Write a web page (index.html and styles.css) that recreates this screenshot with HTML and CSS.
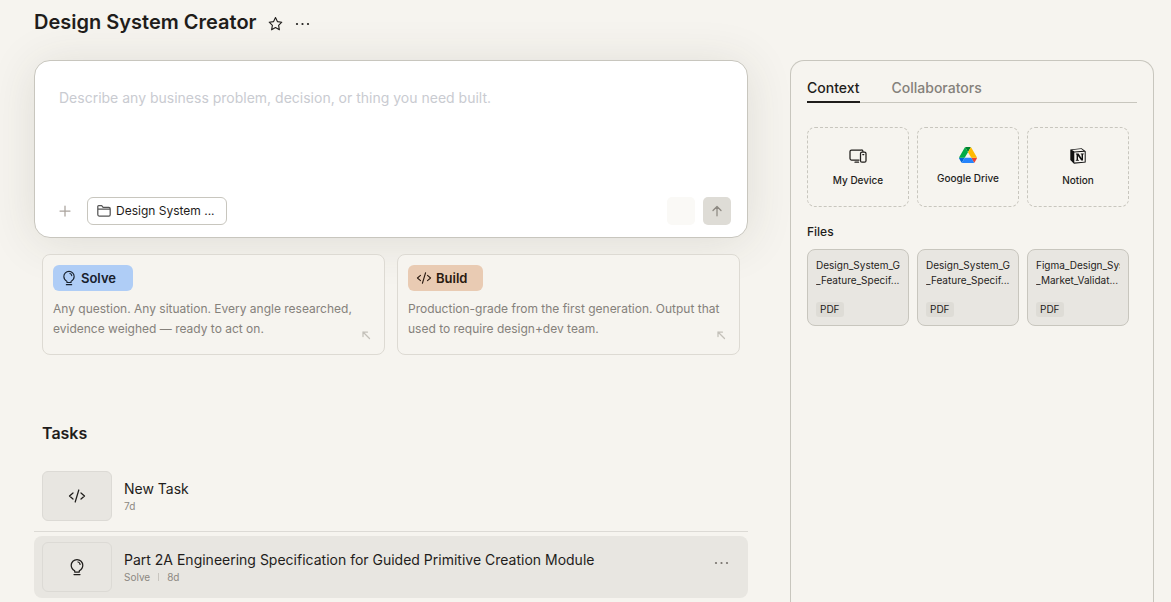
FILE: index.html
```html
<!DOCTYPE html>
<html lang="en">
<head>
<meta charset="utf-8">
<meta name="viewport" content="width=device-width, initial-scale=1">
<title>Design System Creator</title>
<link rel="stylesheet" href="styles.css">
</head>
<body>
<svg class="defs" aria-hidden="true">
  <symbol id="code" viewBox="0 0 18 16"><path d="M5 5 1.500 8 5 11M13 5 16.500 8 13 11M10.800 2 7.200 14"/></symbol>
  <symbol id="bulb" viewBox="0 0 16 18"><path d="M5.700 14v-1.200C3.500 11.600 2.200 9.600 2.200 7.300a5.800 5.800 0 0 1 11.600 0c0 2.300-1.300 4.300-3.500 5.500V14zM5 16.500h6M9 4c1.200.3 1.900 1.100 2.100 2.300"/></symbol>
  <symbol id="dots" viewBox="0 0 16 4"><g fill="currentColor" stroke="none"><circle cx="2" cy="2" r="1.100"/><circle cx="7.500" cy="2" r="1.100"/><circle cx="13" cy="2" r="1.100"/></g></symbol>
  <symbol id="corner" viewBox="0 0 10 10"><path d="M2 6.500V2h4.500M2 2l6.500 6.500"/></symbol>
</svg>
<div class="page">
  <main class="main">
    <header class="title-bar">
      <h1>Design System Creator</h1>
      <button class="icon-btn" aria-label="Favorite"><svg class="star" viewBox="0 0 16 16"><path d="m7.500 1.600 1.900 4 4.400.6-3.200 3.100.8 4.500-3.900-2.200-3.900 2.200.8-4.500L1.200 6.200l4.400-.6z"/></svg></button>
      <button class="icon-btn" aria-label="More options"><svg class="dots"><use href="#dots"/></svg></button>
    </header>
    <form class="composer">
      <textarea aria-label="Prompt" placeholder="Describe any business problem, decision, or thing you need built."></textarea>
      <div class="toolbar">
        <button type="button" class="icon-btn add" aria-label="Add"><svg class="plus" viewBox="0 0 12 12"><path d="M6 1v10M1 6h10"/></svg></button>
        <button type="button" class="project"><svg class="folder" viewBox="0 0 14 12"><path d="M.8 9.500v-8c0-.5.300-.8.800-.8h3.100l1.400 1.700h5.800c.8 0 1.300.5 1.300 1.300v6c0 .8-.5 1.300-1.300 1.300H2.100C1.300 11 .8 10.500.8 9.500zM.8 4h12"/></svg>Design System ...</button>
        <button type="button" class="square blank" aria-label="Voice"></button>
        <button type="submit" class="square send" aria-label="Send"><svg class="plus" viewBox="0 0 12 12"><path d="M6 10.800V1.500M2 5.500l4-4 4 4"/></svg></button>
      </div>
    </form>
    <div class="modes">
      <button class="mode">
        <span class="tag solve"><svg class="bulb"><use href="#bulb"/></svg>Solve</span>
        <span class="desc">Any question. Any situation. Every angle researched, evidence weighed — ready to act on.</span>
        <svg class="corner"><use href="#corner"/></svg>
      </button>
      <button class="mode">
        <span class="tag build"><svg class="code"><use href="#code"/></svg>Build</span>
        <span class="desc">Production-grade from the first generation. Output that used to require design+dev team.</span>
        <svg class="corner"><use href="#corner"/></svg>
      </button>
    </div>
    <section>
      <h2>Tasks</h2>
      <ul class="tasks">
        <li><div class="task">
          <span class="thumb"><svg class="code large"><use href="#code"/></svg></span>
          <div class="info"><h3>New Task</h3><p>7d</p></div>
        </div></li>
        <li><div class="task active">
          <span class="thumb"><svg class="bulb large"><use href="#bulb"/></svg></span>
          <div class="info"><h3>Part 2A Engineering Specification for Guided Primitive Creation Module</h3><p><span>Solve</span><i></i><span>8d</span></p></div>
          <button class="icon-btn more" aria-label="Task options"><svg class="dots"><use href="#dots"/></svg></button>
        </div></li>
      </ul>
    </section>
  </main>
  <aside class="panel">
    <div class="tabs" role="tablist">
      <button role="tab" aria-selected="true">Context</button>
      <button role="tab" aria-selected="false">Collaborators</button>
    </div>
    <div class="sources">
      <button class="source"><svg class="device" viewBox="0 0 18 16"><path d="M10 12H2.500A1.500 1.500 0 0 1 1 10.500v-7A1.500 1.500 0 0 1 2.500 2h10A1.500 1.500 0 0 1 14 3.300M6 14.200h3.500"/><rect x="11.500" y="4" width="5.500" height="10.200" rx="1.500"/><path d="M13.800 6.500h1"/></svg>My Device</button>
      <button class="source"><svg class="drive" viewBox="0 0 87.300 78"><path d="m6.600 66.850 3.850 6.650c.8 1.400 1.950 2.500 3.300 3.300l13.750-23.800h-27.500c0 1.550.4 3.100 1.200 4.500z" fill="#0066da"/><path d="m43.650 25-13.750-23.800c-1.350.8-2.500 1.900-3.300 3.300l-25.400 44a9.060 9.060 0 0 0-1.200 4.500h27.500z" fill="#00ac47"/><path d="m73.550 76.800c1.350-.8 2.500-1.900 3.300-3.300l1.600-2.750 7.650-13.250c.8-1.400 1.200-2.950 1.200-4.500h-27.502l5.852 11.500z" fill="#ea4335"/><path d="m43.650 25 13.750-23.800c-1.350-.8-2.900-1.200-4.500-1.200h-18.500c-1.600 0-3.150.45-4.500 1.200z" fill="#00832d"/><path d="m59.800 53h-32.300l-13.750 23.800c1.350.8 2.900 1.200 4.500 1.200h50.800c1.600 0 3.150-.45 4.500-1.200z" fill="#2684fc"/><path d="m73.400 26.500-12.700-22c-.8-1.400-1.950-2.500-3.300-3.300l-13.750 23.800 16.150 28h27.450c0-1.550-.4-3.100-1.200-4.500z" fill="#ffba00"/></svg>Google Drive</button>
      <button class="source"><svg class="notion" viewBox="0 0 16 16"><path d="M.3 1.400 11.600.3 15.700 3.200v11.300L4 15.700.3 12z" fill="#111"/><path d="M2 1.900 11.200 1.100l2.500 1.700L4.500 3.400zM4.300 4.500l10.400-.7v9.900l-10.400.8z" fill="#f7f5f1"/><path d="M5.900 5.600h2.700l3 4.600V6.400l-.8-.2v-.7h3v.7l-.8.200v6.200h-1.700L8 8v3.800l.9.200v.7H5.800V12l.8-.2V6.600l-.7-.2z" fill="#111"/></svg>Notion</button>
    </div>
    <h4>Files</h4>
    <div class="files">
      <button class="file"><span>Design_System_G</span><span>_Feature_Specif...</span><b>PDF</b></button>
      <button class="file"><span>Design_System_G</span><span>_Feature_Specif...</span><b>PDF</b></button>
      <button class="file"><span>Figma_Design_Sys</span><span>_Market_Validat...</span><b>PDF</b></button>
    </div>
  </aside>
</div>
</body>
</html>
```
FILE: styles.css
```css
* { box-sizing: border-box; }
body { margin: 0; background: #f6f4ef; color: #1f1d1b; font-family: Inter, "Liberation Sans", sans-serif; }
h1, h2, h3, h4, p, ul { margin: 0; padding: 0; }
ul { list-style: none; }
button { font: inherit; color: inherit; background: none; border: 0; padding: 0; cursor: pointer; }
svg { display: block; flex: none; fill: none; stroke: currentColor; stroke-width: 1.25; stroke-linecap: round; stroke-linejoin: round; }
.defs { position: absolute; width: 0; height: 0; }

.page { display: grid; grid-template-columns: minmax(0, 1fr) 364px; gap: 42px; min-height: 100vh; padding: 0 17px 0 34px; }
.title-bar { display: flex; align-items: center; height: 44px; gap: 11px; }
h1 { font-size: 20px; line-height: 28px; font-weight: 600; }
.icon-btn { display: grid; place-items: center; }
.star { width: 16px; height: 16px; margin-top: 3px; stroke-width: 1.1; }
.dots { width: 16px; height: 4px; margin-top: 4px; }

.composer { margin-top: 16px; background: #fff; border: 1px solid #c8c6be; border-radius: 16px; padding: 24px 16px 12px 24px; box-shadow: 0 4px 48px rgba(60, 55, 40, 0.12); }
textarea { display: block; width: 100%; height: 112px; padding: 2px 0; border: 0; outline: 0; resize: none; background: none; font: 14px/22px Inter, "Liberation Sans", sans-serif; color: inherit; }
textarea::placeholder { color: #c9cbd1; opacity: 1; }
.toolbar { display: flex; align-items: center; gap: 8px; }
.add { width: 12px; margin-right: 8px; color: #aaa39d; }
.plus { width: 12px; height: 12px; }
.project { display: flex; align-items: center; gap: 5px; width: 140px; height: 28px; padding: 0 9px 1px; border: 1px solid #c8c6be; border-radius: 6px; font-size: 12px; white-space: nowrap; }
.folder { width: 14px; height: 12px; color: #555; }
.square { display: grid; place-items: center; width: 28px; height: 28px; border-radius: 5px; }
.blank { margin-left: auto; background: #faf9f6; }
.send { background: #dedcd6; color: #8d8982; }

.modes { display: grid; grid-template-columns: 1fr 1fr; gap: 12px; padding: 0 8px; margin-top: 16px; }
.mode { position: relative; display: flex; flex-direction: column; align-items: flex-start; gap: 8px; padding: 10px 10px 15px; text-align: left; background: #f6f4ef; border: 1px solid #dddad3; border-radius: 8px; }
.tag { display: flex; align-items: center; height: 26px; border-radius: 6px; font-size: 13px; font-weight: 600; }
.solve { gap: 4px; padding: 0 17px 0 8px; background: #afcdf6; color: #17202c; }
.build { gap: 4px; padding: 0 16px 0 8px; background: #e9cbb3; color: #2a1a10; }
.bulb { width: 16px; height: 16px; }
.bulb.large { height: 18px; }
.code { width: 16px; height: 14px; }
.code.large { width: 20px; height: 16px; }
.desc { font-size: 12px; line-height: 20px; color: #85817b; }
.corner { position: absolute; right: 13px; bottom: 14px; width: 10px; height: 10px; color: #c3c0b9; }

h2 { margin: 66px 8px 19px; font-size: 16px; line-height: 25px; font-weight: 600; }
.tasks li + li { border-top: 1px solid #dcdad5; padding-top: 4px; }
.task { display: flex; align-items: center; gap: 12px; padding: 6px 18px 6px 8px; border-radius: 8px; }
.tasks li:first-child { padding-bottom: 4px; }
.active { background: #e8e6e1; }
.thumb { display: grid; place-items: center; width: 70px; height: 50px; background: #e8e6e1; border: 1px solid #dcdad5; border-radius: 6px; }
.info { flex: 1; min-width: 0; }
h3 { font-size: 14px; line-height: 20px; font-weight: 400; }
.info p { display: flex; align-items: center; gap: 8px; font-size: 10px; line-height: 14px; color: #8c8882; }
.info i { width: 1px; height: 8px; background: #c8c5bf; }
.more { color: #77736d; margin-bottom: 12px; }

.panel { margin-top: 60px; padding: 13px 16px; border: 1px solid #c8c6be; border-bottom: 0; border-radius: 14px 14px 0 0; }
.tabs { display: flex; gap: 32px; border-bottom: 1px solid #c8c6be; font-size: 14px; line-height: 28px; font-weight: 500; color: #85817b; }
.tabs [aria-selected="true"] { color: #1f1d1b; box-shadow: 0 1px #1f1d1b, inset 0 -1px #1f1d1b; }
.sources, .files { display: grid; grid-template-columns: repeat(3, 1fr); gap: 8px; padding-right: 8px; }
.sources { margin-top: 24px; }
.source { display: flex; flex-direction: column; align-items: center; justify-content: center; gap: 9px; height: 80px; padding-top: 2px; border: 1px dashed #c8c6be; border-radius: 8px; font-size: 10px; line-height: 15px; font-weight: 500; }
.device { width: 18px; height: 16px; }
.notion { width: 16px; height: 16px; stroke: none; }
.drive { width: 18px; height: 16px; stroke: none; margin-top: -3px; margin-bottom: -1px; }
h4 { margin: 15px 0 8px; font-size: 12px; line-height: 19px; font-weight: 500; }
.file { min-width: 0; padding: 8px; text-align: left; background: #e8e6e1; border: 1px solid #c8c6be; border-radius: 8px; font-size: 10px; line-height: 15px; }
.file span { display: block; overflow: hidden; white-space: nowrap; }
.file b { display: inline-block; margin-top: 14px; padding: 0 4px; background: #dedcd6; border-radius: 3px; font-weight: 400; }
```
